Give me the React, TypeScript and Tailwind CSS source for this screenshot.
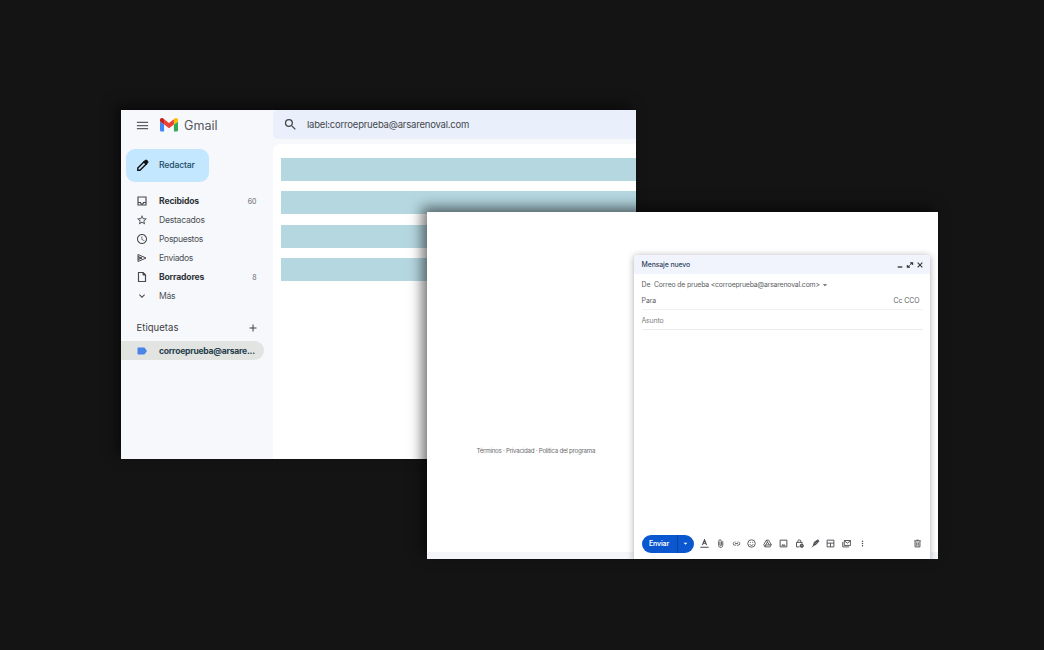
import React from 'react';
import {
  MdAdd, MdArrowDropDown, MdExpandMore, MdLabel, MdLink,
  MdMenu, MdMoreVert, MdSchedule, MdSearch, MdStarOutline,
} from 'react-icons/md';

type IconProps = { className?: string };

const Svg = ({ className, children }: IconProps & { children: React.ReactNode }) => (
  <svg viewBox="0 0 24 24" fill="none" stroke="currentColor" strokeWidth="2" className={className}>{children}</svg>
);

const GmailLogo = () => (
  <svg viewBox="52 42 88 66" className="h-[13.5px] w-[18px]">
    <path fill="#4285f4" d="M58 108h14V74L52 59v43c0 3.32 2.69 6 6 6" />
    <path fill="#34a853" d="M120 108h14c3.32 0 6-2.69 6-6V59l-20 15" />
    <path fill="#fbbc04" d="M120 48v26l20-15v-8c0-7.42-8.47-11.65-14.4-7.2" />
    <path fill="#ea4335" d="M72 74V48l24 18 24-18v26L96 92" />
    <path fill="#c5221f" d="M52 51v8l20 15V48l-5.6-4.2c-5.94-4.45-14.4-.22-14.4 7.2" />
  </svg>
);

const Pencil = ({ className }: IconProps) => (
  <Svg className={className}>
    <path strokeWidth="2.6" d="M3.300 20.700v-4L15 5l4 4L7.300 20.700Z" />
    <path fill="currentColor" d="m14.500 5.500 3-3c.7-.7 1.300-.7 2 0l2 2c.7.7.7 1.300 0 2l-3 3Z" />
  </Svg>
);
const Inbox = ({ className }: IconProps) => (
  <Svg className={className}><path strokeWidth="2.300" d="M4 4h16v16H4ZM4 15h5c0 4 6 4 6 0h5" /></Svg>
);
const Send = ({ className }: IconProps) => (
  <Svg className={className}><path d="M4 5v14l16-7ZM4 12h8M4 9l8 3-8 3" /></Svg>
);
const Draft = ({ className }: IconProps) => (
  <Svg className={className}><path strokeWidth="2.300" d="M5 3h9l5 5v13H5Z" /><path fill="currentColor" d="M14 3v5h5Z" /></Svg>
);
const Minimize = ({ className }: IconProps) => <Svg className={className}><path strokeWidth="4" d="M5 18h14" /></Svg>;
const Expand = ({ className }: IconProps) => (
  <Svg className={className}><path strokeWidth="3.200" d="M12 5h8v7M20 5l-7 6M4 12v7h8M4 19l7-6" /></Svg>
);
const Close = ({ className }: IconProps) => (
  <Svg className={className}><path strokeWidth="3.200" d="m5 5 14 14M19 5 5 19" /></Svg>
);
const TextColor = ({ className }: IconProps) => (
  <Svg className={className}><path strokeWidth="2.700" d="M1 22h22M6.500 16 12 2l5.500 14M8.500 11.500h7" /></Svg>
);
const Clip = ({ className }: IconProps) => (
  <Svg className={className}><path strokeWidth="2.300" d="M18 6v11c0 7.500-11 7.500-11 0V6c0-5 7.500-5 7.500 0v10c0 3-4 3-4 0V7" /></Svg>
);
const Smile = ({ className }: IconProps) => (
  <Svg className={className}><circle cx="12" cy="12" r="10" strokeWidth="2.300" /><path strokeWidth="2.300" d="M7.500 14c2 4.500 7 4.500 9 0M7.500 9h2.500M14 9h2.500" /></Svg>
);
const Drive = ({ className }: IconProps) => (
  <Svg className={className}><path strokeWidth="2.300" d="M9 3h6l7 12-3 6H5l-3-6ZM12 8l-5 8h10ZM9 3l3 5M22 15l-5 1M5 21l2-5" /></Svg>
);
const Picture = ({ className }: IconProps) => (
  <Svg className={className}><path strokeWidth="2.500" d="M3 3h18v18H3Z" /><path fill="currentColor" stroke="none" d="m6 18 4-5 3 3 2-2 3 4Z" /></Svg>
);
const LockTime = ({ className }: IconProps) => (
  <Svg className={className}>
    <path strokeWidth="2.500" d="M12 21H4V9h15v3M7.500 9V6c0-5 8-5 8 0v3" />
    <circle cx="18" cy="18" r="4.500" fill="currentColor" /><path stroke="white" strokeWidth="1.400" d="M18 16v2h2" />
  </Svg>
);
const Signature = ({ className }: IconProps) => (
  <Svg className={className}>
    <path fill="currentColor" d="m6 17 3-9 10-6 2 4-8 9Z" /><path strokeWidth="2.500" d="M3 22 9 15" /><path stroke="white" strokeWidth="1.100" d="m10 13 5-5" />
  </Svg>
);
const Layout = ({ className }: IconProps) => (
  <Svg className={className}><path strokeWidth="2.400" d="M3 3h18v18H3ZM3 11h18M12 11v10" /></Svg>
);
const MailStack = ({ className }: IconProps) => (
  <Svg className={className}><path strokeWidth="2.400" d="M6 4h17v13H6ZM6 5l8.500 6L23 5M2 8v13h17" /></Svg>
);
const Trash = ({ className }: IconProps) => (
  <Svg className={className}><path strokeWidth="2.500" d="M5.500 6v15h13V6M3 5h18M9 3h6M10 9v9M14 9v9" /></Svg>
);

const folders = [
  { icon: Inbox, name: 'Recibidos', count: '60', style: 'font-bold text-[#303338] tracking-[-0.14px]' },
  { icon: MdStarOutline, name: 'Destacados', count: '', style: 'tracking-[-0.25px]' },
  { icon: MdSchedule, name: 'Pospuestos', count: '', style: 'tracking-[-0.35px]' },
  { icon: Send, name: 'Enviados', count: '', style: 'tracking-[-0.35px]' },
  { icon: Draft, name: 'Borradores', count: '8', style: 'font-bold text-[#303338] tracking-[-0.17px]' },
  { icon: MdExpandMore, name: 'Más', count: '', style: 'tracking-[-0.3px]' },
];

const tools = [TextColor, Clip, MdLink, Smile, Drive, Picture, LockTime, Signature, Layout, MailStack, MdMoreVert];

function Sidebar() {
  return (
    <aside className="flex w-[152px] shrink-0 flex-col">
      <div className="flex h-[30px] items-center pl-[14px]">
        <MdMenu className="size-[15px] text-[#5b5e63]" />
        <span className="ml-[9.500px] flex"><GmailLogo /></span>
        <span className="ml-[6.500px] pt-[2px] text-[12.600px] text-[#55585c]">Gmail</span>
      </div>
      <button className="mt-[9px] ml-[5px] flex h-[33px] w-[83px] shrink-0 items-center rounded-[9px] bg-[#c2e7ff] pl-[10px] text-[8.700px] font-medium text-[#244b65]">
        <Pencil className="mr-[10px] size-[13px] text-[#111]" /><span className="tracking-[-0.18px]">Redactar</span>
      </button>
      <nav className="mt-[9px] text-[8.600px] text-[#4d5054]">
        {folders.map(({ icon: Icon, name, count, style }) => (
          <div key={name} className="flex h-[19px] items-center pr-[16.500px] pl-[15px]">
            <Icon className="size-[12px] shrink-0 text-[#46494d]" />
            <span className={`ml-[11px] flex-1 pt-px ${style}`}>{name}</span>
            <span className="pt-px text-[7px] text-[#66696e]">{count}</span>
          </div>
        ))}
      </nav>
      <div className="mt-[12px] flex h-[21px] items-center justify-between pr-[14px] pl-[15.500px] text-[9.500px] text-[#3d4043]">
        <span className="pt-px tracking-[0.04px]">Etiquetas</span><MdAdd className="size-[12px]" />
      </div>
      <div className="mt-[3px] flex h-[19px] w-[143px] items-center rounded-r-full bg-[#e1e4e1] pl-[15px] text-[8.600px] font-bold tracking-[-0.26px] text-[#26404d]">
        <MdLabel className="mr-[11px] size-[12px] shrink-0 text-[#4a84e8]" /><span className="pt-px">corroeprueba@arsare...</span>
      </div>
    </aside>
  );
}

function MailWindow() {
  return (
    <section className="absolute top-[110px] left-[121px] flex h-[349px] w-[515px] overflow-hidden bg-[#f6f8fc]">
      <Sidebar />
      <main className="flex flex-1 flex-col">
        <div className="flex h-[29px] items-center rounded-l-[5px] bg-[#e9effb] pl-[10px] text-[9.500px] text-[#45484c]">
          <MdSearch className="mr-[9px] size-[15px]" />
          <span className="pt-px tracking-[-0.2px]">label:corroeprueba@arsarenoval.com</span>
        </div>
        <div className="mt-[5px] flex flex-1 flex-col gap-[10.400px] rounded-tl-[8px] bg-white pt-[14px] pl-[8px]">
          {[0, 1, 2, 3].map((row) => <div key={row} className="h-[23px] bg-[#b5d7e0]" />)}
        </div>
      </main>
    </section>
  );
}

function Compose() {
  return (
    <div className="mt-[43px] mr-[8px] flex w-[296px] flex-col rounded-t-[4px] bg-white shadow-[0_1px_6px_1px_rgba(0,0,0,0.26)]">
      <header className="flex h-[19px] shrink-0 items-center rounded-t-[4px] bg-[#f1f4fc] pr-[6px] pl-[7.500px] text-[6.900px] font-medium text-[#34475f]">
        <span className="flex-1 pt-[2px] tracking-[-0.1px]">Mensaje nuevo</span>
        <span className="flex gap-[2px] text-[#333]"><Minimize className="size-[8px]" /><Expand className="size-[8px]" /><Close className="size-[8px]" /></span>
      </header>
      <div className="mx-[7.500px] flex flex-1 flex-col text-[6.900px] text-[#5b5e62]">
        <div className="mt-[3px] flex h-[15px] items-center">
          <span className="pt-[2px]">De</span><span className="ml-[3.500px] pt-[2px] tracking-[-0.17px]">Correo de prueba &lt;corroeprueba@arsarenoval.com&gt;</span><MdArrowDropDown className="size-[10px]" />
        </div>
        <div className="flex h-[18px] items-center justify-between border-b border-[#f0f1f2] pt-[2px] pr-[3px]"><span>Para</span><span className="tracking-[-0.05px]">Cc CCO</span></div>
        <div className="flex h-[20px] items-center border-b border-[#ebeced] pt-[3px] text-[#7b7e82]"><span className="tracking-[-0.14px]">Asunto</span></div>
        <div className="flex-1" />
        <footer className="mb-[6px] flex h-[18px] items-center text-[#46494d]">
          <button className="flex h-[18px] w-[52.500px] items-center rounded-full bg-[#0b57d0] text-[6.900px] font-semibold text-white">
            <span className="flex h-full w-[36px] items-center justify-center border-r border-[#0842a0] pt-[2px] tracking-[-0.1px]">Enviar</span>
            <MdArrowDropDown className="ml-[3px] size-[9px]" />
          </button>
          <div className="ml-[6px] flex flex-1 items-center gap-[6.800px]">
            {tools.map((Icon, i) => <Icon key={i} className="size-[9px] shrink-0" />)}
          </div>
          <Trash className="mr-[1px] size-[9px]" />
        </footer>
      </div>
    </div>
  );
}

export default function App() {
  return (
    <div className="relative h-[650px] w-[1044px] overflow-hidden bg-[#141414] font-['Inter',sans-serif] leading-none">
      <div className="absolute top-[110px] left-[121px] h-[349px] w-[515px] shadow-[-5px_-5px_12px_0px_rgba(0,0,0,0.5)]" />
      <MailWindow />
      <section className="absolute top-[212px] left-[427px] flex h-[346.500px] w-[511px] shadow-[-5px_-5px_12px_0px_rgba(0,0,0,0.55)]">
        <div className="flex flex-1 overflow-hidden bg-white">
          <div className="flex w-[207px] shrink-0 flex-col justify-end">
            <p className="mb-[97px] pl-[49.500px] text-[6.200px] tracking-[-0.26px] whitespace-nowrap text-[#686b6e]">Términos · Privacidad · Política del programa</p>
            <div className="h-[7px] w-[511px] shrink-0 bg-[#f4f6fa]" />
          </div>
          <div className="relative flex"><Compose /></div>
        </div>
      </section>
    </div>
  );
}
